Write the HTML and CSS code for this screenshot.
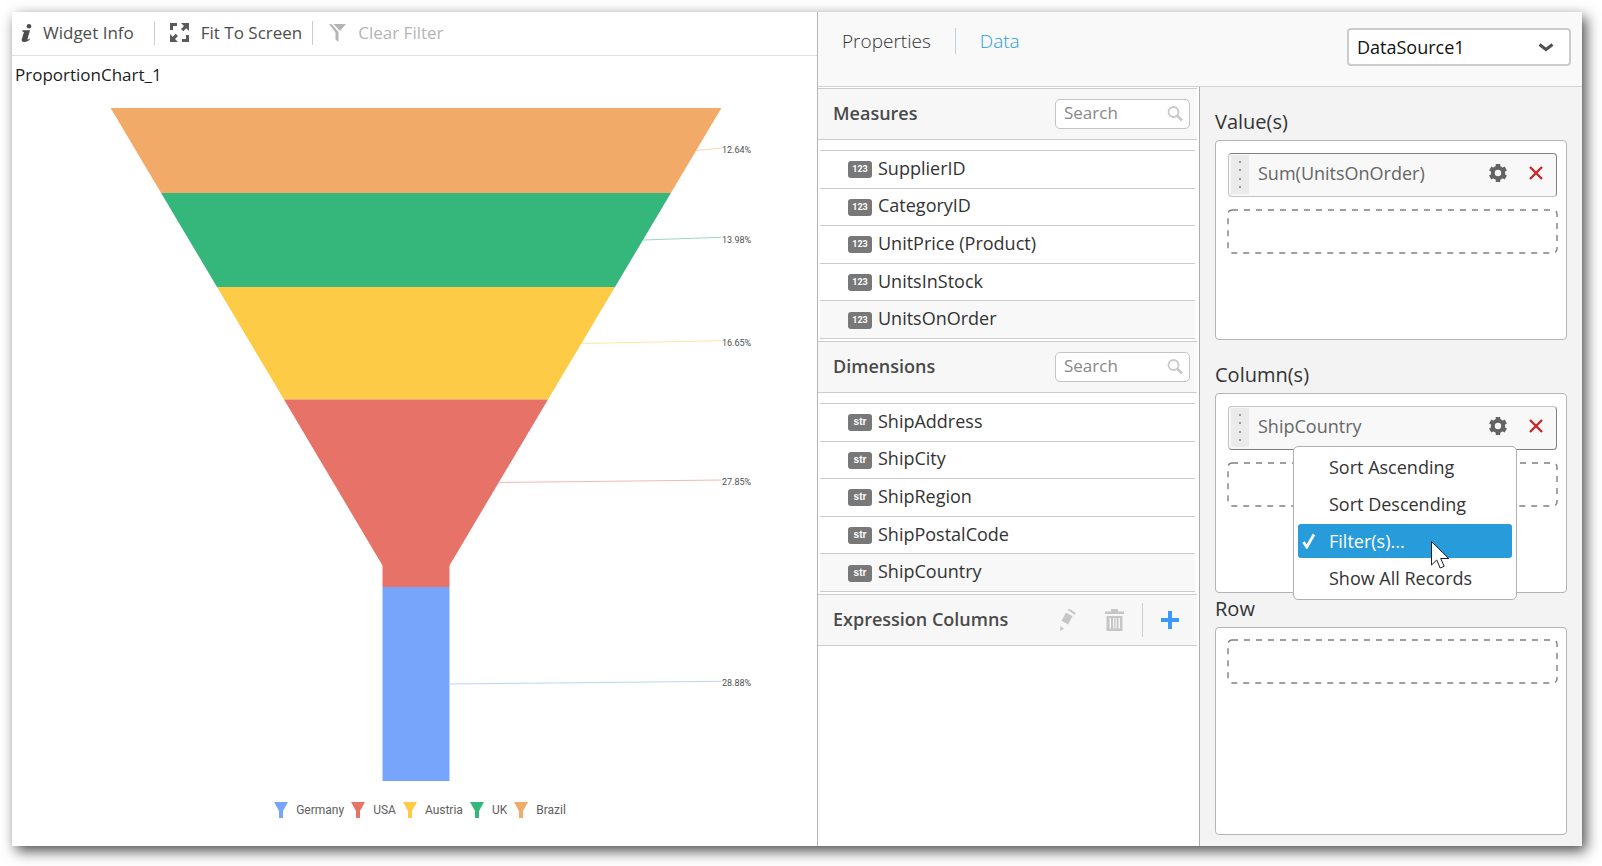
FILE: index.html
```html
<!DOCTYPE html>
<html lang="en">

<head>
  <meta charset="UTF-8">
  <meta name="viewport" content="width=device-width, initial-scale=1.0">
  <title>Dashboard Designer</title>
  <link rel="stylesheet" href="styles.css">
</head>

<body>
  <!-- Shared icons -->
  <svg class="sprite" aria-hidden="true">
    <symbol id="gear" viewBox="0 0 18 18">
      <circle cx="9" cy="9" r="5.200" fill="none" stroke="#636363" stroke-width="4" />
      <path d="M9 0v4M9 14v4M1.200 4.500l3.500 2M13.300 11.500l3.500 2M1.200 13.500l3.500-2M13.300 6.500l3.500-2" stroke="#636363" stroke-width="4.500" />
    </symbol>
    <symbol id="cross" viewBox="0 0 14 14">
      <path d="M1 1l12 12M13 1L1 13" stroke="#c9252b" stroke-width="2.400" />
    </symbol>
    <symbol id="search" viewBox="0 0 16 16">
      <circle cx="6.500" cy="6" r="5" fill="none" stroke="#c8c8c8" stroke-width="1.800" />
      <path d="M10 9.500l5 5" stroke="#c8c8c8" stroke-width="2.500" />
    </symbol>
    <symbol id="funnel" viewBox="0 0 14 16">
      <path d="M0 0h14L9 9v7H5V9z" />
    </symbol>
  </svg>

  <div class="app">
    <section class="preview">
      <div class="toolbar">
        <button class="tool">
          <svg width="11" height="18" viewBox="0 0 11 18">
            <circle cx="8" cy="2.300" r="2.300" fill="#4d4d4d" />
            <path d="M1.500 6.300h7.500L6.500 15c-.2.900.5.800 2-.6l.6.600C7.300 17.200 5.500 18 3.500 18 1 18 .2 16.800.800 15l2-6.300c.2-.8-.1-1-1.500-1z" fill="#4d4d4d" />
          </svg>
          Widget Info
        </button>
        <span class="divider"></span>
        <button class="tool fit">
          <svg width="19" height="19" viewBox="0 0 19 19" fill="#5a5a5a">
            <path d="M0 0h7v3H3v4H0zM19 19h-7v-3h4v-4h3zM11 0h8v8l-2.700-2.700-3 3-2.300-2.300 3-3zM0 19v-8l2.700 2.700 3-3L8 13l-3 3 3 3z" />
          </svg>
          Fit To Screen
        </button>
        <span class="divider"></span>
        <button class="tool clear" disabled>
          <svg width="17" height="18" viewBox="0 0 17 18" fill="#b5b5b5">
            <path d="M0 0h2.500l7 8v10l-3-2.500V8.500zM4.500 0H17l-6 7z" />
          </svg>
          Clear Filter
        </button>
      </div>

      <h2 class="chart-title">ProportionChart_1</h2>

      <svg class="chart" viewBox="0 0 805 700">
        <path d="M98.600 16H709.400L658.900 101H149.100z" fill="#f1aa68" />
        <path d="M149.100 101H658.900L603 195H205z" fill="#35b67b" />
        <path d="M205 195H603L536 307.500H272z" fill="#fdcb45" />
        <path d="M272 307.500H536L437.500 473.500V495H370.500V473.500z" fill="#e77368" />
        <path d="M370.500 495H437.500V689H370.500z" fill="#77a5fb" />
        <g fill="none" stroke-opacity="0.5">
          <path d="M684.500 58.500L709.500 56" stroke="#f1aa68" />
          <path d="M631 148L709.500 145.300" stroke="#35b67b" />
          <path d="M569.500 251.500L709.500 248.700" stroke="#fdcb45" />
          <path d="M487.500 390.500L709.500 388" stroke="#e77368" />
          <path d="M438 592L709.500 589.300" stroke="#77a5fb" />
        </g>
        <g class="chart-label">
          <text x="710" y="61">12.64%</text>
          <text x="710" y="151">13.98%</text>
          <text x="710" y="254">16.65%</text>
          <text x="710" y="393">27.85%</text>
          <text x="710" y="594">28.88%</text>
        </g>
      </svg>

      <ul class="legend">
        <li><svg class="blue"><use href="#funnel" /></svg>Germany</li>
        <li><svg class="red"><use href="#funnel" /></svg>USA</li>
        <li><svg class="yellow"><use href="#funnel" /></svg>Austria</li>
        <li><svg class="green"><use href="#funnel" /></svg>UK</li>
        <li><svg class="orange"><use href="#funnel" /></svg>Brazil</li>
      </ul>
    </section>

    <section class="designer">
      <header class="designer-header">
        <nav class="tabs">
          <a href="#properties">Properties</a>
          <a href="#data" class="active">Data</a>
        </nav>
        <div class="source">
          <select aria-label="Data source">
            <option>DataSource1</option>
          </select>
          <svg width="16" height="9" viewBox="0 0 16 9">
            <path d="M1.500 1.500L8 6.500l6.500-5" fill="none" stroke="#505050" stroke-width="3" />
          </svg>
        </div>
      </header>

      <div class="designer-body">
        <div class="fields">
          <div class="group-header">
            <h3>Measures</h3>
            <div class="search">
              <input type="text" placeholder="Search" aria-label="Search measures">
              <svg width="16" height="16"><use href="#search" /></svg>
            </div>
          </div>
          <div class="field-area">
            <ul class="field-list">
              <li><span class="badge">123</span>SupplierID</li>
              <li><span class="badge">123</span>CategoryID</li>
              <li><span class="badge">123</span>UnitPrice (Product)</li>
              <li><span class="badge">123</span>UnitsInStock</li>
              <li class="selected"><span class="badge">123</span>UnitsOnOrder</li>
            </ul>
          </div>

          <div class="group-header">
            <h3>Dimensions</h3>
            <div class="search">
              <input type="text" placeholder="Search" aria-label="Search dimensions">
              <svg width="16" height="16"><use href="#search" /></svg>
            </div>
          </div>
          <div class="field-area">
            <ul class="field-list">
              <li><span class="badge str">str</span>ShipAddress</li>
              <li><span class="badge str">str</span>ShipCity</li>
              <li><span class="badge str">str</span>ShipRegion</li>
              <li><span class="badge str">str</span>ShipPostalCode</li>
              <li class="selected"><span class="badge str">str</span>ShipCountry</li>
            </ul>
          </div>

          <div class="group-header">
            <h3>Expression Columns</h3>
            <div class="actions">
              <button aria-label="Edit expression" disabled>
                <svg width="16" height="22" viewBox="0 0 16 22" fill="#c6c6c6">
                  <path d="M7.500.800L9.500 0 15.500 3.500 15 6zM6 3.500L12.500 7.200 8 15.500 1.500 11.800zM.5 17L4 19.500 0 22z" />
                </svg>
              </button>
              <button aria-label="Delete expression" disabled>
                <svg width="19" height="22" viewBox="0 0 19 22" fill="#c6c6c6">
                  <path fill-rule="evenodd" d="M6 0h7v2.500h6V5H0V2.500h6zM1.500 7h16v15h-16zM4.500 9v10.500h1.500V9zM8 9v10.500h1.200V9zM10.500 9v10.500h1.200V9zM13.500 9v10.500h1.500V9z" />
                </svg>
              </button>
              <span class="divider"></span>
              <button aria-label="Add expression">
                <svg width="18" height="18" viewBox="0 0 18 18">
                  <path d="M9 0v18M0 9h18" stroke="#3b99fc" stroke-width="4" />
                </svg>
              </button>
            </div>
          </div>
        </div>

        <div class="shelves">
          <h4>Value(s)</h4>
          <div class="shelf">
            <div class="pill">
              <span class="grip"><i></i><i></i><i></i><i></i></span>
              <span class="pill-name">Sum(UnitsOnOrder)</span>
              <button aria-label="Settings"><svg width="18" height="18"><use href="#gear" /></svg></button>
              <button aria-label="Remove"><svg width="14" height="14"><use href="#cross" /></svg></button>
            </div>
            <svg class="drop"><rect width="100%" height="100%" rx="4" /></svg>
          </div>

          <h4>Column(s)</h4>
          <div class="shelf">
            <div class="pill open">
              <span class="grip"><i></i><i></i><i></i><i></i></span>
              <span class="pill-name">ShipCountry</span>
              <button aria-label="Settings"><svg width="18" height="18"><use href="#gear" /></svg></button>
              <button aria-label="Remove"><svg width="14" height="14"><use href="#cross" /></svg></button>
              <div class="menu">
                <button>Sort Ascending</button>
                <button>Sort Descending</button>
                <button class="checked">
                  <svg width="14" height="16" viewBox="0 0 14 16">
                    <path d="M1.500 9l3.300 5L12 1.500" fill="none" stroke="#fff" stroke-width="2.800" />
                  </svg>
                  Filter(s)...
                </button>
                <button>Show All Records</button>
                <svg class="cursor" width="19" height="28" viewBox="0 0 19 28">
                  <path d="M.5.5v23.500l5.200-5 3.500 8 4-1.700-3.500-7.800h8z" fill="#fff" stroke="#1c1c2c" />
                </svg>
              </div>
            </div>
            <svg class="drop"><rect width="100%" height="100%" rx="4" /></svg>
          </div>

          <h4 class="tight">Row</h4>
          <div class="shelf last">
            <svg class="drop"><rect width="100%" height="100%" rx="4" /></svg>
          </div>
        </div>
      </div>
    </section>
  </div>
</body>

</html>
```
FILE: styles.css
```css
* {
  box-sizing: border-box;
}

body {
  margin: 0;
  padding: 12px 20px 20px 12px;
  min-height: 100vh;
  display: flex;
  background-color: #fff;
  color: #333;
  font-family: 'Open Sans', 'Noto Sans', sans-serif;
  font-size: 18px;
}

button,
input,
select {
  font-family: inherit;
  font-size: inherit;
  color: inherit;
}

button {
  padding: 0;
  border: none;
  background: none;
  display: flex;
  align-items: center;
}

h2,
h3,
h4,
ul {
  margin: 0;
  padding: 0;
}

ul {
  list-style: none;
}

svg {
  flex-shrink: 0;
}

.sprite {
  position: absolute;
  width: 0;
  height: 0;
}

.app {
  flex: 1;
  display: flex;
  background-color: #fff;
  box-shadow: 4px 5px 13px rgba(0, 0, 0, 0.7);
}

/* Preview */
.preview {
  flex: 1;
  min-width: 0;
}

.toolbar {
  display: flex;
  align-items: center;
  height: 44px;
  padding: 0 0 2px 9px;
  border-bottom: 1px solid #e0e0e0;
}

.tool {
  gap: 11px;
  font-size: 17px;
  color: #4d4d4d;
}

.tool.fit {
  margin-left: 15px;
  gap: 12px;
}

.tool.clear {
  margin-left: 16px;
  gap: 12px;
  color: #b5b5b5;
}

.divider {
  width: 1px;
  height: 24px;
  background-color: #ccc;
}

.toolbar .divider {
  margin-left: 20px;
}

.toolbar .fit + .divider {
  margin-left: 10px;
}

.chart-title {
  padding: 1px 0 0 3px;
  font-size: 17px;
  font-weight: 400;
  line-height: 35px;
  color: #1c1c1c;
}

.chart {
  display: block;
  width: 100%;
}

.chart-label {
  font-family: Roboto, sans-serif;
  font-size: 9px;
  fill: #505050;
}

.legend {
  display: flex;
  justify-content: center;
  gap: 7px;
  padding-left: 11px;
  font-family: Roboto, sans-serif;
  font-size: 12px;
  line-height: 36px;
  color: #606060;
}

.legend li {
  display: flex;
  align-items: center;
  gap: 8px;
}

.legend svg {
  width: 14px;
  height: 16px;
}

.blue {
  fill: #77a5fb;
}

.red {
  fill: #e77368;
}

.yellow {
  fill: #fdcb45;
}

.green {
  fill: #35b67b;
}

.orange {
  fill: #f1aa68;
}

/* Designer */
.designer {
  width: 765px;
  display: flex;
  flex-direction: column;
  border-left: 1px solid #b5b5b5;
}

.designer-header {
  display: flex;
  justify-content: space-between;
  align-items: flex-start;
  height: 75px;
  padding: 16px 11px 0 24px;
  background-color: #f9f9f9;
  border-bottom: 1px solid #ccd5dc;
}

.tabs {
  display: flex;
  font-size: 19px;
  font-weight: 300;
  line-height: 26px;
}

.tabs a {
  color: #333;
  text-decoration: none;
}

.tabs .active {
  margin-left: 24px;
  padding-left: 24px;
  border-left: 1px solid #bcd0de;
  color: #2a9ddc;
}

.source {
  position: relative;
}

.source select {
  appearance: none;
  width: 224px;
  height: 38px;
  padding: 0 8px;
  border: 2px solid #ccc;
  border-radius: 4px;
  background-color: #fff;
  color: #111;
}

.source svg {
  position: absolute;
  top: 15px;
  right: 17px;
  pointer-events: none;
}

.designer-body {
  flex: 1;
  display: flex;
}

.fields {
  flex: 1;
  padding: 1px 2px 0 0;
  border-right: 1px solid #adadad;
}

.group-header {
  display: flex;
  justify-content: space-between;
  align-items: center;
  height: 52px;
  padding: 0 7px 1px 15px;
  background-color: #f7f7f7;
  border-top: 1px solid #ccc;
  border-bottom: 1px solid #ccc;
}

.group-header h3 {
  padding-bottom: 2px;
  font-size: 18px;
  font-weight: 600;
  color: #4a4a4a;
}

.search {
  position: relative;
}

.search input {
  width: 135px;
  height: 30px;
  padding: 0 28px 2px 8px;
  border: 1px solid #c4c4c4;
  border-radius: 5px;
  background-color: #fff;
  font-size: 17px;
}

.search input::placeholder {
  color: #888;
}

.search svg {
  position: absolute;
  top: 7px;
  right: 7px;
}

.field-area {
  padding: 10px 2px 2px;
}

.field-list {
  display: flex;
  flex-direction: column;
  height: 189px;
  border-bottom: 1px solid #ccc;
}

.field-list li {
  flex: 1;
  display: flex;
  align-items: center;
  gap: 6px;
  padding: 0 0 3px 28px;
  border-top: 1px solid #ccc;
  color: #333;
}

.field-list .selected {
  background-color: #f8f8f8;
}

.badge {
  width: 24px;
  height: 17px;
  margin-top: 4px;
  border-radius: 3px;
  background-color: #787878;
  color: #fff;
  font: bold 9px/17px Roboto, sans-serif;
  text-align: center;
}

.badge.str {
  font: bold 10px/16px 'Liberation Sans', sans-serif;
}

.actions {
  display: flex;
  align-items: center;
}

.actions button + button {
  margin-left: 29px;
}

.actions .divider {
  height: 34px;
  margin: 0 18px;
}

.actions button:last-child {
  margin-right: 11px;
}

/* Shelves */
.shelves {
  width: 382px;
  padding: 0 15px 11px;
  display: flex;
  flex-direction: column;
  background-color: #f3f3f3;
}

.shelves h4 {
  padding-top: 17px;
  font-size: 20px;
  font-weight: 400;
  line-height: 36px;
}

.shelves .tight {
  padding: 0 0 2px;
  line-height: 32px;
}

.shelf {
  height: 200px;
  padding: 12px 9px 0 12px;
  border: 1px solid #b4b4b4;
  border-radius: 4px;
  background-color: #fff;
}

.shelf.last {
  height: auto;
  flex: 1;
}

.pill {
  position: relative;
  display: flex;
  align-items: center;
  height: 44px;
  margin-bottom: 13px;
  padding: 1px 13px 5px 2px;
  border: 1px solid #c4c4c4;
  border-top-color: #808080;
  border-right-color: #808080;
  border-radius: 4px;
  background-color: #f8f8f8;
}

.pill.open {
  border-top-color: #c4c4c4;
  border-bottom-color: #808080;
}

.grip {
  display: flex;
  flex-direction: column;
  align-items: center;
  align-self: flex-start;
  justify-content: space-between;
  width: 18px;
  height: 39px;
  padding: 6px 0;
  background-color: #ebebeb;
}

.grip i {
  width: 2px;
  height: 2px;
  background-color: #999;
}

.pill-name {
  flex: 1;
  margin-left: 9px;
  color: #666;
}

.pill > button + button {
  margin-left: 22px;
}

.drop {
  display: block;
  width: 100%;
  height: 43px;
  overflow: visible;
}

.drop rect {
  fill: none;
  stroke: #808080;
  stroke-width: 1.4px;
  stroke-dasharray: 6 6;
}

.menu {
  position: absolute;
  z-index: 1;
  top: 39px;
  right: 39px;
  width: 224px;
  display: flex;
  flex-direction: column;
  gap: 3px;
  padding: 3px 4px 4px;
  border: 1px solid #b0b0b0;
  border-radius: 5px;
  background-color: #fff;
}

.menu button {
  height: 34px;
  padding: 0 0 1px 31px;
}

.menu .checked {
  gap: 13px;
  padding-left: 4px;
  border-radius: 3px;
  background-color: #289bdb;
  color: #fff;
}

.cursor {
  position: absolute;
  top: 94px;
  left: 137px;
}
```
